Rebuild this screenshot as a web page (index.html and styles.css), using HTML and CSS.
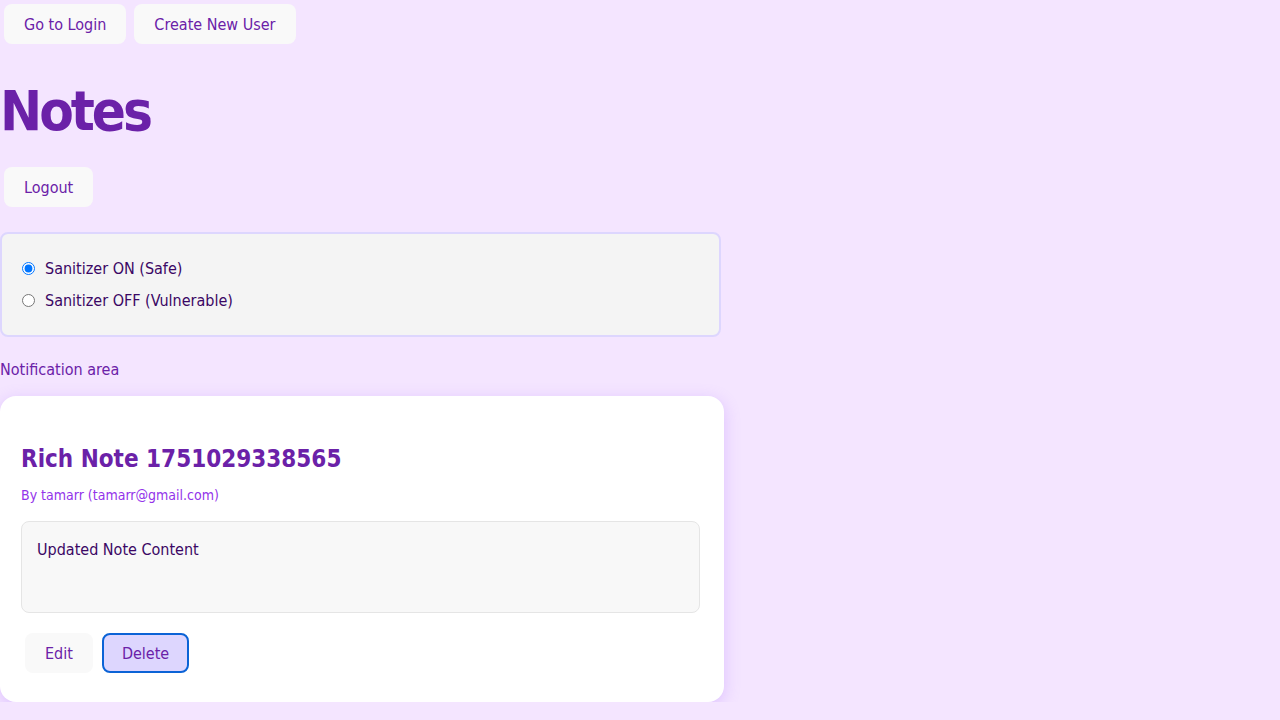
FILE: index.html
```html
<!DOCTYPE html>
<html>
<head>
<meta charset="utf-8">
<link rel="stylesheet" href="styles.css">
</head>
<body>
<div class="topbar">
  <button class="btn">Go to Login</button>
  <button class="btn">Create New User</button>
</div>
<h1 class="title">Notes</h1>
<div class="logout-row">
  <button class="btn">Logout</button>
</div>
<div class="sanitizer">
  <label class="opt"><input type="radio" name="san" checked> Sanitizer ON (Safe)</label>
  <label class="opt"><input type="radio" name="san"> Sanitizer OFF (Vulnerable)</label>
</div>
<div class="notify">Notification area</div>
<div class="card">
  <h2 class="note-title">Rich Note 1751029338565</h2>
  <div class="author">By tamarr (tamarr@gmail.com)</div>
  <div class="content">Updated Note Content</div>
  <div class="actions">
    <button class="btn">Edit</button>
    <button class="btn btn-focus">Delete</button>
  </div>
</div>
</body>
</html>
```

FILE: styles.css
```css
html, body {
  margin: 0;
  padding: 0;
  background: #f4e5ff;
  font-family: Tahoma, "DejaVu Sans Condensed", "DejaVu Sans", sans-serif;
  color: #6b21a8;
}
.topbar {
  padding: 4px;
  display: flex;
  gap: 8px;
}
.btn {
  font-family: inherit;
  font-size: 16px;
  color: #6b21a8;
  background: #f9f9f9;
  border: 2px solid transparent;
  border-radius: 8px;
  height: 40px;
  padding: 0 18px;
  cursor: pointer;
}
.title {
  font-size: 56px;
  letter-spacing: -3px;
  font-weight: bold;
  margin: 28px 0 21px 0;
  line-height: 70px;
  color: #6b21a8;
}
.logout-row {
  padding: 0 4px;
  display: flex;
}
.sanitizer {
  margin-top: 25px;
  background: #f4f4f4;
  border: 2px solid #ddd6fe;
  border-radius: 8px;
  padding: 20px 0 20px 20px;
  box-sizing: border-box;
  width: 721px;
  height: 105px;
  display: flex;
  flex-direction: column;
  gap: 6px;
  justify-content: center;
}
.opt {
  color: #3b0764;
  font-size: 16px;
  display: flex;
  align-items: center;
  gap: 7px;
  height: 26px;
}
.opt input {
  margin: 0 3px 0 0;
  width: 13px;
  height: 13px;
}
.notify {
  margin-top: 23px;
  font-size: 16px;
  color: #6b21a8;
  line-height: 20px;
}
.card {
  margin-top: 16px;
  width: 724px;
  height: 306px;
  box-sizing: border-box;
  background: #ffffff;
  border-radius: 16px;
  box-shadow: 0 4px 16px rgba(170, 110, 255, 0.3);
  padding: 49px 24px 28px 21px;
}
.note-title {
  margin: 0;
  font-size: 24px;
  font-weight: bold;
  line-height: 28px;
  color: #6b21a8;
}
.author {
  margin-top: 13px;
  font-size: 14px;
  color: #9333ea;
  line-height: 18px;
}
.content {
  margin-top: 17px;
  background: #f8f8f8;
  border: 1px solid #e5e5e5;
  border-radius: 8px;
  height: 92px;
  box-sizing: border-box;
  padding: 18px 15px 16px;
  color: #3b0764;
  font-size: 16px;
}
.actions {
  margin-top: 20px;
  padding-left: 4px;
  display: flex;
  gap: 9px;
}
.btn-focus {
  background: #ddd6fe;
  border-color: #0b63d6;
}
```
